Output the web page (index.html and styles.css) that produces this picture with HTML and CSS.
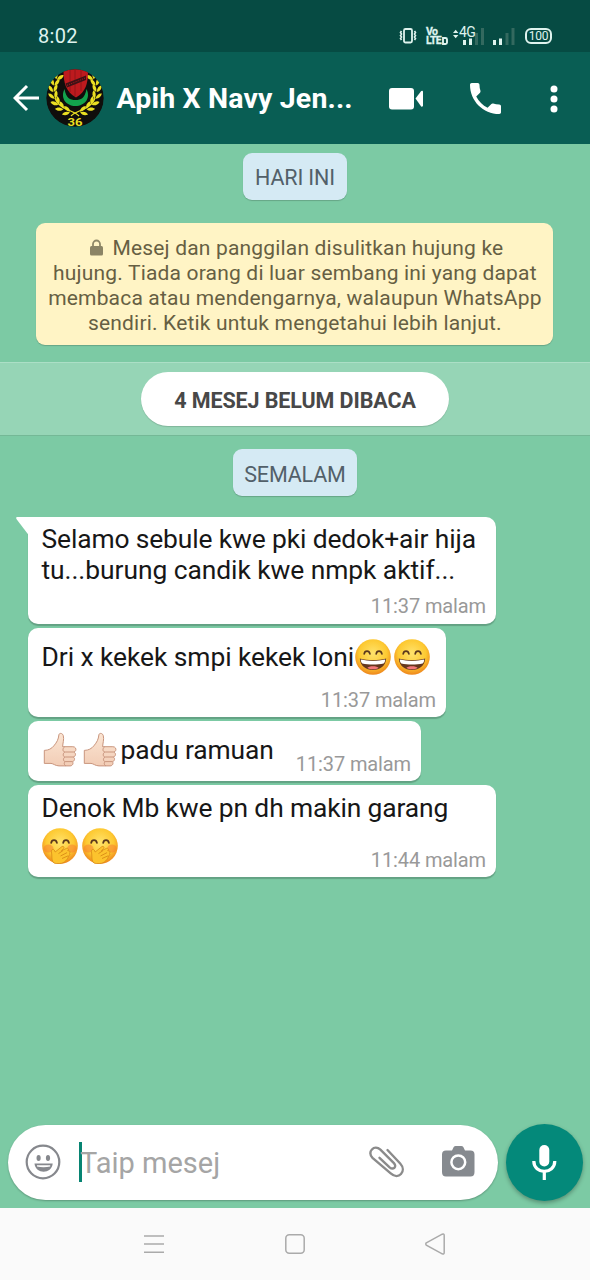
FILE: index.html
```html
<!DOCTYPE html>
<html lang="ms">
<head>
<meta charset="utf-8">
<title>Apih X Navy Jen...</title>
<link rel="stylesheet" href="styles.css">
</head>
<body>
<svg class="defs" width="0" height="0" aria-hidden="true">
  <defs>
    <radialGradient id="face" cx=".5" cy=".4" r=".6"><stop offset="0" stop-color="#ffe36c"/><stop offset=".65" stop-color="#fdc931"/><stop offset="1" stop-color="#ee861c"/></radialGradient>
    <linearGradient id="skin" x1="0" y1="0" x2="0" y2="1"><stop offset="0" stop-color="#fbe5d3"/><stop offset="1" stop-color="#f2cdb6"/></linearGradient>
    <symbol id="grin" viewBox="0 0 36 36">
      <circle cx="18" cy="18" r="17.800" fill="url(#face)"/>
      <path d="M9.200 14.800c.6-3.600 5-3.600 5.700 0M21.200 14.800c.6-3.600 5-3.600 5.700 0" fill="none" stroke="#5b381d" stroke-width="1.700" stroke-linecap="round"/>
      <path d="M4.800 19.500c8 2.200 18.400 2.200 26.400 0-.6 7.500-6 11.500-13.200 11.500S5.400 27 4.800 19.500z" fill="#65371f"/>
      <path d="M5.800 20.600c8 1.900 16.400 1.900 24.400 0 0 2-.5 3-1.600 3.800-6 1.400-15.200 1.400-21.200 0-1.100-.8-1.600-1.800-1.600-3.800z" fill="#fff"/>
      <path d="M12.300 28.900c1.500-2.300 9.900-2.300 11.400 0-3 1.800-8.400 1.800-11.400 0z" fill="#f2787b"/>
    </symbol>
    <symbol id="giggle" viewBox="0 0 36 36">
      <circle cx="18" cy="18" r="17.800" fill="url(#face)"/>
      <ellipse cx="6.500" cy="20.500" rx="5" ry="4" fill="#f77a32" opacity=".5"/><ellipse cx="30" cy="20.500" rx="4.800" ry="4" fill="#f77a32" opacity=".5"/>
      <path d="M9.200 14.800c.6-3.600 5-3.600 5.700 0M21.200 14.800c.6-3.600 5-3.600 5.700 0" fill="none" stroke="#5b381d" stroke-width="1.800" stroke-linecap="round"/>
      <path d="M12 35c-2.500-2-2-5.500-2.200-8-.2-2.800-1-5 .8-5.600 1.200-.3 2 1 2.600 2.600l6.600-5.300c1.500-1.100 3 .6 1.800 1.900l-2.200 2.200 5-2.400c1.800-.7 2.800 1.200 1.300 2.200l1.300.3c1.500.4 1.300 2 .2 2.500.9.500.9 1.700-.2 2.300-1.500 3.500-4.400 7.800-9.400 7.800-2 0-4 .3-5.600-.5z" fill="#fcc32d" stroke="#d98a16" stroke-width=".8"/>
      <path d="m16.500 25.600 4.500-3M18.500 28l6.600-3.400M20 30.500l6.400-2.800" fill="none" stroke="#d98a16" stroke-width=".9"/>
    </symbol>
    <symbol id="thumb" viewBox="0 0 36 36">
      <path d="M2.300 18.400c4.300-.1 7.200-1.700 9.500-4.500 3.200-3.800 4.600-6.500 5.100-11 .2-2.200 3.800-2 4.400.8.900 3.800-.5 7.500-.7 11h10.200c4 0 4 5 .8 5.300 2.800 1 2.400 4.500-.4 5 2.200 1 1.600 4.300-.8 4.600 1.400 1.600.2 4.300-2.300 4.300H17c-4-.2-5.500-2.300-8-2.500H2.300z" fill="url(#skin)" stroke="#c9957d" stroke-width="1" stroke-linejoin="round"/>
      <path d="M31.400 20h-8.200c-2.700 0-3-3.500-.6-5.200M31 25h-7.800c-2.500 0-2.600-3.800-.4-5M30.200 29.600h-6.700c-2.500 0-2.800-3.300-.5-4.600M23.500 29.600c-2 .9-1.400 3.500.5 4.200" fill="none" stroke="#c9957d" stroke-width="1"/>
    </symbol>
    <g id="leaves" fill="#eadf22">
      <path d="M0-.3c-4 .3-6.500-1.500-7.200-4.200C-3.500-5-1-3.500 0-.3z"/><path d="M0 .3c-4-.3-6.500 1.500-7.200 4.200C-3.500 5-1 3.500 0 .3z"/>
    </g>
    <g id="branch">
      <use href="#leaves" transform="translate(24 43) rotate(14)"/>
      <use href="#leaves" transform="translate(17.500 40) rotate(32)"/>
      <use href="#leaves" transform="translate(12.500 35.500) rotate(50)"/>
      <use href="#leaves" transform="translate(9 29.500) rotate(68)"/>
      <use href="#leaves" transform="translate(7.500 23) rotate(84)"/>
      <use href="#leaves" transform="translate(8 16.500) rotate(100)"/>
      <use href="#leaves" transform="translate(10.500 10.500) rotate(118)"/>
      <path d="M33 47C28 41 13 41 9 29" fill="none" stroke="#eadf22" stroke-width="1.200"/>
    </g>
    <clipPath id="round"><circle cx="29" cy="29" r="28.700"/></clipPath>
  </defs>
</svg>

<div class="screen">
  <header class="top">
    <div class="status">
      <span class="clock">8:02</span>
      <div class="indicators">
        <svg width="18" height="18" viewBox="0 0 18 18" fill="none" stroke="#dff3ee"><rect x="5" y="2" width="8" height="13.500" rx="1.500" stroke-width="1.800"/><path d="m2.500 4-1 1.500 1 1.500-1 1.500 1 1.500-1 1.500 1 1.500m13-9 1 1.500-1 1.500 1 1.500-1 1.500 1 1.500-1 1.500" stroke-width="1.600"/></svg>
        <div class="volte">
          <span>Vo</span>
          <span class="lte">LTE<svg width="6" height="8" viewBox="0 0 6 8"><path d="M1 1h2.500Q5 1 5 2.500v3Q5 7 3.500 7H1z" fill="none" stroke="#dff3ee" stroke-width="1.900"/></svg></span>
        </div>
        <div class="network">
          <span class="generation">4G</span>
          <svg width="32" height="20" viewBox="0 0 32 20"><path d="m0 6 2.700-3.200L5.400 6zm0 2 2.700 3.200L5.400 8z" fill="#dff3ee"/><path d="M10 13h3v5h-3zm6-1.500h3V18h-3z" fill="#dff3ee"/><path d="M22 6h3v12h-3zm6-5h3v17h-3z" fill="#33695f"/></svg>
        </div>
        <svg class="signal" width="22" height="20" viewBox="0 0 22 20"><path d="M0 13h3v5H0zm6-1.500h3V18H6z" fill="#dff3ee"/><path d="M12.500 6h3v12h-3zm6-5h3v17h-3z" fill="#33695f"/></svg>
        <span class="battery">100</span>
      </div>
    </div>
    <div class="appbar">
      <svg class="back" width="27" height="28" viewBox="0 0 27 28" fill="none" stroke="#fff" stroke-width="3"><path d="M26 14H2M14 2 2 14l12 12"/></svg>
      <svg class="avatar" width="58" height="58" viewBox="0 0 58 58">
        <g clip-path="url(#round)">
          <circle cx="29" cy="29" r="29" fill="#100e0c"/>
          <use href="#branch"/><use href="#branch" transform="translate(58 0) scale(-1 1)"/>
          <path d="M18.500 20C14 29 20 37 29.500 37S45 29 40.500 20C39 29 35 31 29.500 31S20 29 18.500 20z" fill="#12a34c"/>
          <path d="M17.500 2Q29-2 42 2c0 12-2 21-12 26.500C20 23 17.500 14 17.500 2z" fill="#bd1a1e"/>
          <path d="M24 1v22m5-23v27m6-27v22" stroke="#8c1418" stroke-width=".8"/>
          <path d="m19.500 14.500 20.500-8v4.500l-19 7.500z" fill="#3d1216"/>
          <path d="m21 16.300 18-7.200" stroke="#b81a1e" stroke-width="1" stroke-dasharray="1 1.300"/>
        </g>
        <text class="number" x="29" y="56.500" text-anchor="middle" textLength="15" lengthAdjust="spacingAndGlyphs">36</text>
      </svg>
      <h1 class="title">Apih X Navy Jen...</h1>
      <svg class="video" width="35" height="22" viewBox="0 0 35 22" fill="#fff"><rect x="0" y="0" width="25" height="21.500" rx="3"/><path d="m26.500 10.500 5.500-7.200c.7-.9 2-.6 2 .6v13.700c0 1.200-1.300 1.500-2 .6z"/></svg>
      <svg class="phone" width="31" height="31" viewBox="3 3 18 18" fill="#fff"><path d="M6.620 10.790c1.440 2.830 3.760 5.140 6.590 6.590l2.200-2.200c.27-.27.670-.36 1.020-.24 1.120.37 2.330.57 3.570.57.550 0 1 .45 1 1V20c0 .55-.45 1-1 1-9.390 0-17-7.610-17-17 0-.55.45-1 1-1h3.500c.55 0 1 .45 1 1 0 1.250.2 2.450.57 3.570.11.350.03.740-.25 1.020l-2.200 2.200z"/></svg>
      <svg class="more" width="8" height="28" viewBox="0 0 8 28" fill="#fff"><circle cx="4" cy="4" r="3.500"/><circle cx="4" cy="14" r="3.500"/><circle cx="4" cy="24" r="3.500"/></svg>
    </div>
  </header>

  <main class="chat">
    <div class="day day-today">HARI INI</div>
    <div class="notice">
      <div><svg class="lock" width="13" height="17" viewBox="0 0 13 17"><path d="M3 8V5a3.500 3.500 0 0 1 7 0v3" fill="none" stroke="#8f8868" stroke-width="1.800"/><rect y="7" width="13" height="9.500" rx="1.500" fill="#8b8465"/></svg>Mesej dan panggilan disulitkan hujung ke</div>
      <div>hujung. Tiada orang di luar sembang ini yang dapat</div>
      <div>membaca atau mendengarnya, walaupun WhatsApp</div>
      <div>sendiri. Ketik untuk mengetahui lebih lanjut.</div>
    </div>
    <div class="unread"><span class="unread-label">4 MESEJ BELUM DIBACA</span></div>
    <div class="day day-yesterday">SEMALAM</div>
    <div class="messages">
      <article class="bubble bubble-first">
        <svg class="tail" width="13" height="19" viewBox="0 0 13 19"><path d="M1.500 0H13v18.500L.8 2.400C-.2 1 0 0 1.500 0z" fill="#fff"/></svg>
        <div class="line">Selamo sebule kwe pki dedok+air hija</div>
        <div class="line line-wide">tu...burung candik kwe nmpk aktif...</div>
        <time class="time">11:37 malam</time>
      </article>
      <article class="bubble bubble-second">
        <div class="line line-emoji line-wide">Dri x kekek smpi kekek loni<svg class="emoji"><use href="#grin"/></svg><svg class="emoji"><use href="#grin"/></svg></div>
        <time class="time">11:37 malam</time>
      </article>
      <article class="bubble bubble-third">
        <div class="line line-emoji"><svg class="emoji"><use href="#thumb"/></svg><svg class="emoji"><use href="#thumb"/></svg>padu ramuan</div>
        <time class="time">11:37 malam</time>
      </article>
      <article class="bubble bubble-fourth">
        <div class="line">Denok Mb kwe pn dh makin garang</div>
        <div class="last-row">
          <div class="line line-emoji"><svg class="emoji"><use href="#giggle"/></svg><svg class="emoji"><use href="#giggle"/></svg></div>
          <time class="time">11:44 malam</time>
        </div>
      </article>
    </div>
    <div class="composer">
      <div class="input">
        <svg width="36" height="36" viewBox="0 0 36 36"><circle cx="18" cy="18" r="16.300" fill="none" stroke="#86888d" stroke-width="2.200"/><ellipse cx="13.600" cy="14" rx="2.100" ry="3" fill="#86888d"/><ellipse cx="23" cy="14" rx="2.100" ry="3" fill="#86888d"/><path d="M9.500 19.500h18.200c-1 11-17.200 11-18.200 0z" fill="#86888d"/><path d="M12 21.300h13.200v1.300c-4 .9-9.200.9-13.200 0z" fill="#fff"/></svg>
        <span class="caret"></span>
        <span class="placeholder">Taip mesej</span>
        <svg class="clip" width="36" height="32" viewBox="0 0 36 32" fill="none" stroke="#8b8b8b" stroke-width="2.400" stroke-linecap="round"><path d="m18.500 4 12.700 13.500c7 7.700-1.700 17-9.500 9.900L3.500 11.800C-2.500 5.900 5.300-1.800 11.400 3.700l13.500 13.400c3.500 3.900-.8 7.200-4.300 4.200L10.500 11.800"/></svg>
        <svg class="camera" width="33" height="31" viewBox="0 0 33 31"><path d="M4 4.500h6L11.700 1q.7-1 2-1h5.600q1.300 0 2 1L23 4.500h5.500q4 0 4 4V26q0 4.500-4 4.500H4Q0 30.500 0 26V8.500q0-4 4-4z" fill="#868a8f"/><circle cx="16.300" cy="16.300" r="6.900" fill="none" stroke="#fff" stroke-width="2.500"/></svg>
      </div>
      <div class="mic"><svg width="25" height="35" viewBox="0 0 25 35"><rect x="7.300" y="0" width="10" height="21.500" rx="5" fill="#fff"/><path d="M1.800 16c0 13.700 21 13.700 21 0M12.300 26v9" fill="none" stroke="#fff" stroke-width="3.200"/></svg></div>
    </div>
  </main>

  <nav class="navbar">
    <svg width="20" height="20" viewBox="0 0 20 20" fill="none" stroke="#aaa" stroke-width="1.500"><path d="M0 2h20M0 10h20M0 18.200h20"/></svg>
    <svg width="20" height="20" viewBox="0 0 20 20" fill="none" stroke="#aaa" stroke-width="1.500"><rect x=".8" y=".8" width="18.400" height="18.400" rx="3.500"/></svg>
    <svg width="20" height="22" viewBox="0 0 20 22" fill="none" stroke="#aaa" stroke-width="1.500"><path d="M1.300 9.800 17.200 1.200q2-.8 2 1.200v17.200q0 2-2 1.200L1.300 12.200q-1-1.200 0-2.400z"/></svg>
  </nav>
</div>
</body>
</html>
```
FILE: styles.css
```css
* { box-sizing: border-box; }
body { margin: 0; font-family: Roboto, "Liberation Sans", sans-serif; background: #7ccaa4; }
.defs { position: absolute; }
svg { display: block; flex: none; }
.screen { display: flex; flex-direction: column; width: 590px; height: 1280px; overflow: hidden; }

.top { flex: none; background: #095e54; box-shadow: 0 1px 2px rgba(0, 0, 0, .25); }
.status { display: flex; justify-content: space-between; height: 52px; padding: 21px 38px 0 38px; background: #064b43; color: #dff3ee; }
.clock { font-size: 20px; line-height: 31px; letter-spacing: .35px; }
.indicators { display: flex; align-items: flex-start; padding-top: 6px; }
.volte { display: flex; flex-direction: column; width: 20px; margin: 0 0 0 9px; font-size: 10.500px; font-weight: 700; line-height: 9px; letter-spacing: -.6px; white-space: nowrap; -webkit-text-stroke: .3px #dff3ee; }
.lte { display: flex; align-items: center; gap: 1px; }
.network { position: relative; margin: 0 0 0 7px; }
.generation { position: absolute; left: 6px; top: -2px; font-size: 14px; line-height: 14px; letter-spacing: -.5px; }
.signal { margin: 0 0 0 8px; }
.battery { width: 27px; height: 16px; margin: 1px 0 0 10px; border: 2px solid #dff3ee; border-radius: 6px; font-size: 12px; line-height: 12.500px; text-align: center; letter-spacing: -.2px; }

.appbar { display: flex; align-items: center; height: 92px; padding: 0 32px 0 13px; }
.avatar { margin-left: 6px; }
.number { font: 700 11px Roboto, sans-serif; fill: #eadf22; }
.title { width: 236px; margin: 2px 0 0 12.500px; color: #fff; font-size: 28.500px; font-weight: 700; line-height: 36px; letter-spacing: .15px; white-space: nowrap; }
.video { margin: 1px 0 0 36.500px; }
.phone { margin: 1px 0 0 46px; }
.more { margin: 1px 0 0 49px; }

.chat { display: flex; flex: 1; flex-direction: column; padding-top: 9px; background: #7ccaa4; }
.day { align-self: center; height: 47px; border-radius: 9px; background: #d5eaf4; color: #526069; font-size: 21.500px; line-height: 50px; text-align: center; letter-spacing: -.15px; box-shadow: 0 1px 1px rgba(0, 0, 0, .18); }
.day-today { width: 104px; }
.notice { display: flex; flex-direction: column; width: 517px; height: 122px; margin: 23px 0 0 36.400px; padding-top: 13px; border-radius: 9px; background: #fff4c5; color: #665f43; font-size: 21px; line-height: 25.100px; letter-spacing: .18px; text-align: center; white-space: nowrap; box-shadow: 0 1px 1px rgba(0, 0, 0, .18); }
.lock { display: inline-block; margin: 0 9px 0 4px; vertical-align: -1px; }
.unread { display: flex; align-items: center; justify-content: center; height: 74px; margin-top: 17px; border-top: 1px solid #acdfc6; border-bottom: 1px solid #74b896; background: #96d5b6; }
.unread-label { width: 308px; height: 54px; border-radius: 27px; background: #fff; color: #484848; font-size: 21.500px; font-weight: 700; line-height: 57px; letter-spacing: -.1px; text-align: center; box-shadow: 0 1px 1px rgba(0, 0, 0, .15); }
.day-yesterday { width: 124px; margin-top: 13px; line-height: 51px; }

.messages { display: flex; flex-direction: column; align-items: flex-start; gap: 4px; margin: 21px 0 0 28px; }
.bubble { position: relative; display: flex; flex-direction: column; justify-content: space-between; padding: 7px 10px 5px 13.500px; border-radius: 10px; background: #fff; box-shadow: 0 1.500px 1px rgba(0, 0, 0, .2); }
.bubble-first { width: 468px; height: 107px; border-top-left-radius: 0; display: block; }
.bubble-first .time { display: block; margin-top: 8px; text-align: right; }
.bubble-second { width: 418px; height: 89px; padding-top: 10px; }
.bubble-third { width: 393px; height: 60px; flex-direction: row; align-items: flex-end; }
.bubble-third .line { align-self: flex-start; margin-top: 3px; }
.bubble-fourth { width: 468px; height: 92px; }
.bubble-fourth > .line { padding-top: 1px; }
.tail { position: absolute; left: -12px; top: 0; }
.line { color: #171717; font-size: 26.400px; line-height: 31px; letter-spacing: -.13px; white-space: nowrap; }
.line-wide { letter-spacing: -.06px; }
.line-emoji { display: flex; align-items: center; height: 38px; }
.emoji { width: 36px; height: 36px; margin: 0 3px 0 .5px; }
.last-row { display: flex; align-items: flex-end; justify-content: space-between; }
.last-row .line { margin-bottom: 7px; }
.time { align-self: flex-end; color: #999; font-size: 20px; line-height: 24px; letter-spacing: -.12px; white-space: nowrap; }

.composer { display: flex; gap: 8px; margin: auto 7px 7px 8px; }
.input { display: flex; align-items: center; width: 490px; height: 75px; margin-top: 1px; padding: 0 23px 2px 17px; border-radius: 38px; background: #fff; box-shadow: 0 1px 2px rgba(0, 0, 0, .25); }
.caret { width: 3px; height: 40px; margin-left: 18px; background: #078472; }
.placeholder { margin: 2px 0 0 -2px; color: #a5a5a5; font-size: 29px; line-height: 38px; white-space: nowrap; }
.clip { margin-left: auto; }
.camera { margin-left: 37px; }
.mic { display: flex; align-items: center; justify-content: center; width: 77px; height: 77px; border-radius: 50%; background: #04897a; box-shadow: 0 2px 4px rgba(0, 0, 0, .3); }

.navbar { display: flex; flex: none; align-items: center; justify-content: space-between; height: 72px; padding: 0 145px 0 144px; background: #fafafa; }
```
